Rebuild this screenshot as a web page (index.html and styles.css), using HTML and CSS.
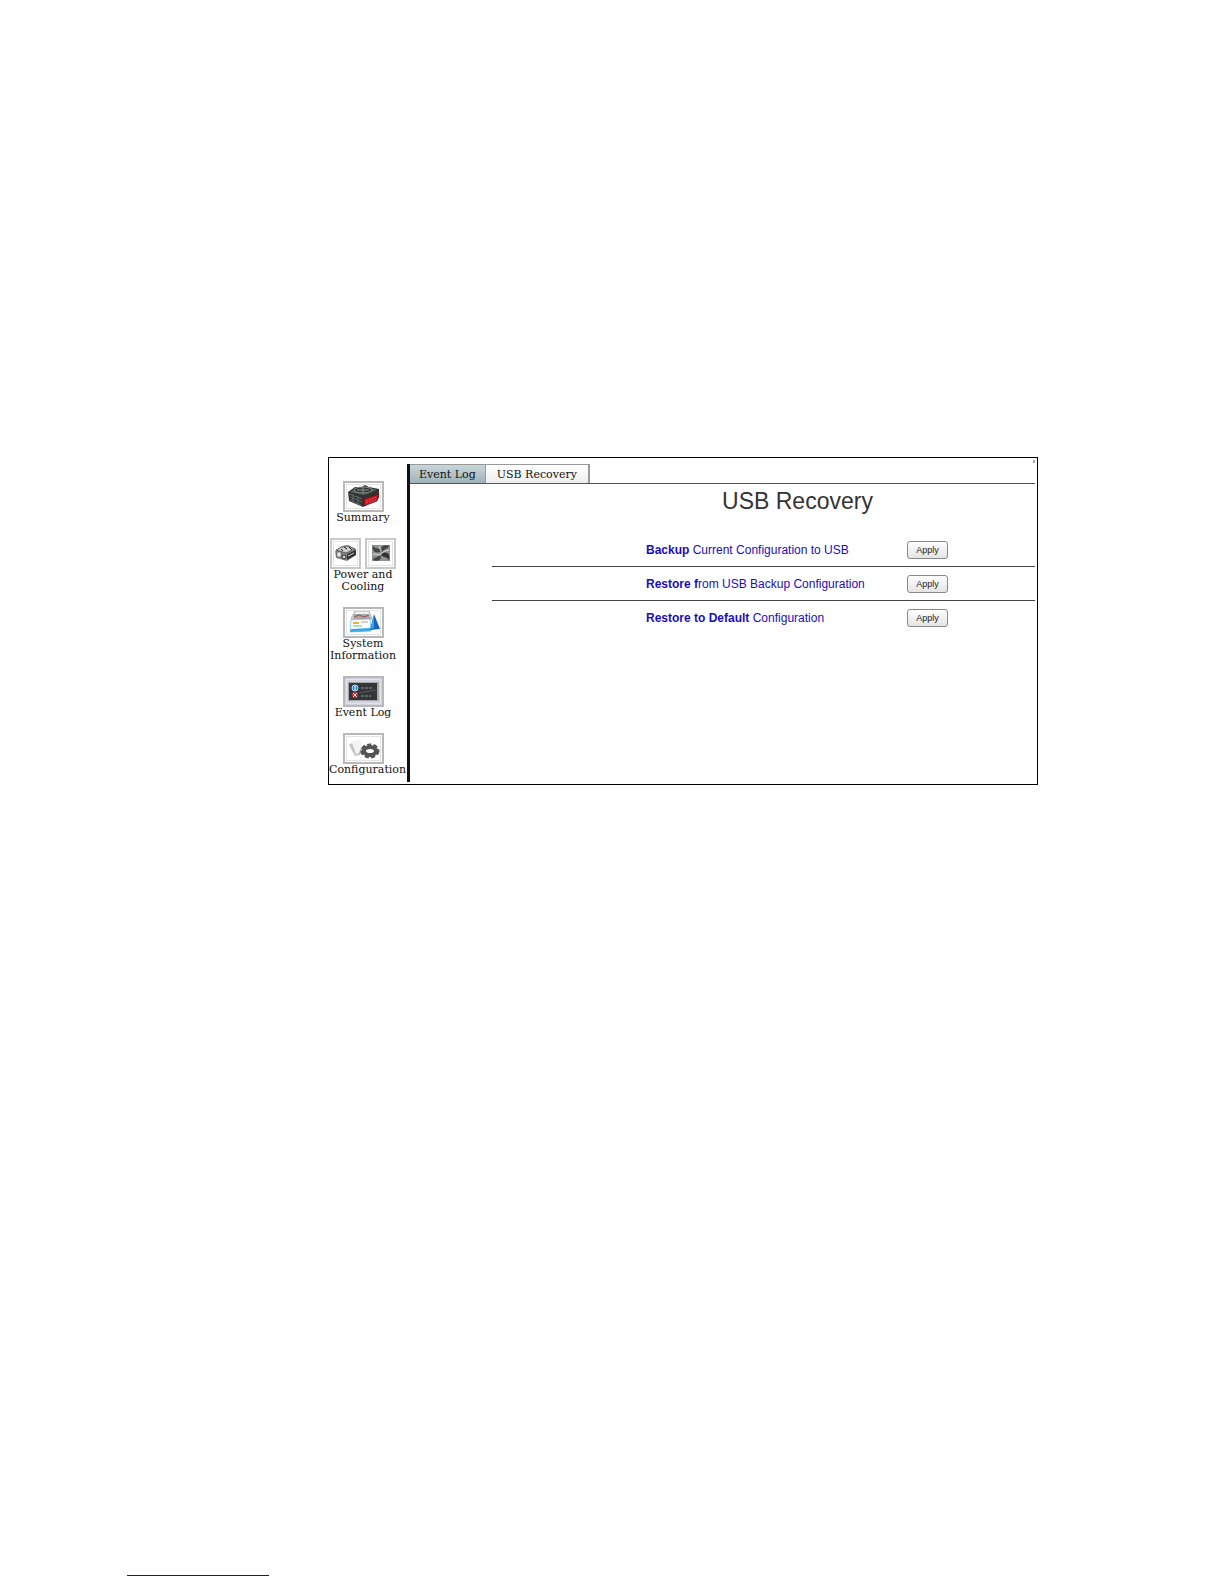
FILE: index.html
```html
<!DOCTYPE html>
<html lang="en">
<head>
    <meta charset="UTF-8">
    <meta name="viewport" content="width=device-width, initial-scale=1.0">
    <title>USB Recovery</title>
    <link rel="stylesheet" href="styles.css">
</head>
<body>
    <div class="console">
        <nav class="sidebar">
            <a href="#" class="nav-item">
                <span class="icons">
                    <svg class="icon" viewBox="2 2 37 27">
                        <path d="M5 11 L12 6 L19 6 L22 4 L26 6 L36 8 L36 17 L20 26 L6 20 Z" fill="#2f3332"/>
                        <path d="M7 11 L14 7 L24 6 L34 9 L21 14 Z" fill="#59615f"/>
                        <ellipse cx="20" cy="9" rx="9" ry="3" fill="#303635" stroke="#858d8a"/>
                        <path d="M14 9 L26 9 M20 6 L20 12" stroke="#8b9390"/>
                        <path d="M6 13 L19 18 M7 16 L19 21 M7 19 L18 24 M10 13 L10 21 M15 15 L15 23" stroke="#777d7b" stroke-width="0.7"/>
                        <path d="M21 18 L36 13 L34 20 L21 25 Z" fill="#c91824" stroke="#5b1015" stroke-width="0.7"/>
                        <path d="M23 20 L34 16 M23 22 L33 19" stroke="#ed5960" stroke-width="0.7" stroke-dasharray="2 1"/>
                    </svg>
                </span>
                <span class="label">Summary</span>
            </a>
            <a href="#" class="nav-item">
                <span class="icons">
                    <svg class="icon small" viewBox="2 2 27 27">
                        <path d="M5 13 L12 8 L18 7 L26 11 L26 17 L17 23 L6 20 Z" fill="#888"/>
                        <path d="M6 12 L12 9 L17 8 L25 11 L16 15 Z" fill="#ccc" stroke="#444" stroke-width="0.7"/>
                        <path d="M17 16 L26 12 L26 17 L17 22 Z" fill="#333"/>
                        <rect x="7" y="14" width="4" height="5" fill="#eee" stroke="#555" stroke-width="0.7"/>
                        <circle cx="14" cy="19" r="2" fill="#ddd" stroke="#222"/>
                        <path d="M11 11 L13 13 M14 9 L17 11 M19 9 L22 12" stroke="#222"/>
                        <path d="M18 18 L24 15" stroke="#ccc"/>
                    </svg>
                    <svg class="icon small" viewBox="2 2 27 27">
                        <rect x="7" y="7" width="18" height="16" fill="#8d9191"/>
                        <path d="M15 14 C8 16 7 10 8 8 C11 12 14 9 16 12 Z" fill="#444"/>
                        <path d="M17 13 C14 8 21 6 24 8 C23 11 20 10 17 14 Z" fill="#444"/>
                        <path d="M17 15 C25 13 25 19 24 22 C21 18 19 20 16 17 Z" fill="#333"/>
                        <path d="M15 17 C18 22 12 24 8 22 C9 19 13 20 15 16 Z" fill="#444"/>
                        <path d="M8 17 C11 14 13 19 16 16 C19 13 20 13 24 12" fill="none" stroke="#e6e6e6"/>
                        <path d="M14 8 C16 10 14 11 16 13" fill="none" stroke="#ddd"/>
                    </svg>
                </span>
                <span class="label">Power and<br>Cooling</span>
            </a>
            <a href="#" class="nav-item">
                <span class="icons">
                    <svg class="icon" viewBox="2 2 37 27">
                        <path d="M8 12 L12 4 L26 4 L29 12 Z" fill="#edf1f3" stroke="#87939c" stroke-width="0.7"/>
                        <path d="M11 7 L26 7 L28 12 L10 12 Z" fill="#a8a8a8"/>
                        <path d="M11 10 L16 8 L21 10 L26 8" fill="none" stroke="#a5543f"/>
                        <path d="M8 13 L27 12 L28 24 L7 25 Z" fill="#fff" stroke="#6fb7e2" stroke-width="0.7"/>
                        <path d="M8 22 L27 21 L28 24 L7 25 Z" fill="#38a7e8"/>
                        <rect x="10" y="15" width="6" height="2" fill="#edb342"/>
                        <path d="M18 15 L25 15" stroke="#9ba6ad"/>
                        <path d="M10 19 L19 19" stroke="#6cbd72"/>
                        <path d="M31 7 L33 12 L37 22 L27 23 Z" fill="#1764bf"/>
                        <path d="M31 9 L31 21 L27 22 Z" fill="#37a3ec"/>
                    </svg>
                </span>
                <span class="label">System<br>Information</span>
            </a>
            <a href="#" class="nav-item">
                <span class="icons">
                    <svg class="icon log" viewBox="2 2 37 27">
                        <rect x="5" y="6" width="31" height="19" fill="#a6a6ae"/>
                        <rect x="6" y="7" width="28" height="17" fill="#333638"/>
                        <path d="M18 12 L29 12 M18 20 L28 20" stroke="#8b8f91" stroke-dasharray="3 1"/>
                        <path d="M16 17 L33 14" stroke="#54595c"/>
                        <circle cx="12" cy="12" r="3" fill="#168bd0" stroke="#bfe3f5"/>
                        <path d="M12 10 L12 14" stroke="#fff"/>
                        <circle cx="12" cy="19" r="3" fill="#c52e31"/>
                        <path d="M10 17 L14 21 M14 17 L10 21" stroke="#ffdada"/>
                    </svg>
                </span>
                <span class="label">Event Log</span>
            </a>
            <a href="#" class="nav-item">
                <span class="icons">
                    <svg class="icon" viewBox="2 2 37 27">
                        <path d="M6 12 L9 10 L13 20 L19 19 L17 22 L12 23 Z" fill="#c4c4c4"/>
                        <path d="M9 8 L17 6 L21 18 L13 21 Z" fill="#f4f4f4"/>
                        <path d="M18 15 L21 12 L23 18 L21 22 L16 20 Z" fill="#aaa"/>
                        <ellipse cx="27" cy="18" rx="8" ry="6" fill="none" stroke="#555" stroke-width="3" stroke-dasharray="4 2"/>
                        <ellipse cx="27" cy="18" rx="6" ry="4" fill="#fff" stroke="#555" stroke-width="4"/>
                    </svg>
                </span>
                <span class="label">Configuration</span>
            </a>
        </nav>

        <main>
            <div class="tabs">
                <a href="#" class="tab">Event Log</a>
                <a href="#" class="tab active">USB Recovery</a>
            </div>
            <h1>USB Recovery</h1>
            <div class="actions">
                <div class="action">
                    <label for="backup-btn"><b>Backup</b> Current Configuration to USB</label>
                    <button id="backup-btn">Apply</button>
                </div>
                <div class="action">
                    <label for="restore-btn"><b>Restore f</b>rom USB Backup Configuration</label>
                    <button id="restore-btn">Apply</button>
                </div>
                <div class="action">
                    <label for="default-btn"><b>Restore to Default</b> Configuration</label>
                    <button id="default-btn">Apply</button>
                </div>
            </div>
        </main>
        <span class="corner-mark"></span>
    </div>

    <footer>
        <hr class="footer-line">
    </footer>
</body>
</html>
```
FILE: styles.css
```css
* {
    box-sizing: border-box;
}

body {
    margin: 0;
    min-height: 100vh;
    display: flex;
    flex-direction: column;
    background-color: #fff;
    font-family: "Liberation Sans", Arial, sans-serif;
}

.console {
    position: relative;
    display: flex;
    margin: 457px 186px 0 328px;
    padding: 6px 2px 2px 0;
    border: 1px solid #000;
}

.corner-mark {
    position: absolute;
    top: 2px;
    right: 2px;
    width: 2px;
    height: 3px;
    background-color: #aaa;
}

/* Sidebar */
.sidebar {
    flex: none;
    width: 81px;
    padding: 17px 10px 6px 0;
    border-right: 3px solid #111;
    display: flex;
    flex-direction: column;
    gap: 14px;
}

.nav-item {
    color: #111;
    text-decoration: none;
    text-align: center;
    font: 11px/12px "DejaVu Serif", serif;
}

.icons {
    display: flex;
    justify-content: center;
    gap: 4px;
}

.icon {
    width: 41px;
    height: 31px;
    border: 2px solid #b8b8b8;
    outline: 1px solid #e4e4e4;
    outline-offset: -4px;
    background-color: #fff;
}

.icon.small {
    width: 31px;
    border-color: #c8c8c8;
}

.icon.log {
    background-color: #d2d2de;
}

.label {
    display: block;
    white-space: nowrap;
}

/* Content */
main {
    flex: 1;
    min-width: 0;
}

.tabs {
    display: flex;
    border-bottom: 1px solid #555;
}

.tab {
    height: 19px;
    padding: 0 9px;
    border: 1px solid #999;
    border-width: 1px 1px 0 0;
    background: linear-gradient(#c8d6da, #9eb3b9);
    color: #111;
    font: 11px/20px "DejaVu Serif", serif;
    text-decoration: none;
}

.tab.active {
    padding: 0 11px;
    border-right-width: 2px;
    background: linear-gradient(#fff, #eee);
}

h1 {
    margin: 4px 0 0 150px;
    color: #333;
    font-size: 23px;
    font-weight: normal;
    line-height: 26px;
    text-align: center;
}

.actions {
    margin: 19px 0 0 82px;
}

.action {
    height: 34px;
    display: flex;
    align-items: center;
    padding-left: 154px;
    border-bottom: 1px solid #444;
}

.action:last-child {
    border-bottom: none;
}

.action label {
    width: 261px;
    color: #1a0dc0;
    font-size: 12px;
    line-height: 16px;
}

button {
    width: 41px;
    height: 18px;
    padding: 0;
    border: 1px solid #888;
    border-radius: 3px;
    background: linear-gradient(#fff, #e4e4e4);
    color: #222;
    font: 9px/14px "Liberation Sans", Arial, sans-serif;
}

/* Footer */
footer {
    margin-top: auto;
    padding: 0 0 8px 127px;
}

.footer-line {
    width: 142px;
    margin: 0;
    border: 0;
    border-top: 1px solid #14148a;
}
```
